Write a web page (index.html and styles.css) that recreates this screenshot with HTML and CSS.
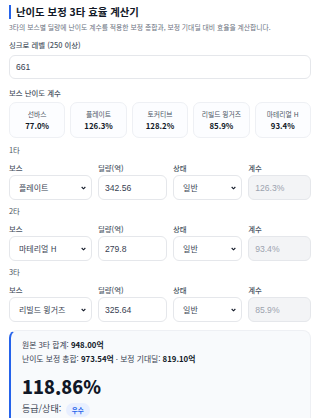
FILE: index.html
```html
<!DOCTYPE html>
<html lang="ko">
<head>
    <meta charset="utf-8">
    <title>난이도 보정 3타 효율 계산기</title>
    <link rel="stylesheet" href="styles.css">
</head>
<body>
    <div class="calc">
        <h1 class="title">난이도 보정 3타 효율 계산기</h1>
        <p class="desc">3타의 보스별 딜량에 난이도 계수를 적용한 보정 총합과, 보정 기대딜 대비 효율을 계산합니다.</p>

        <label class="label">싱크로 레벨 (250 이상)</label>
        <input class="field level" type="text" value="661">

        <div class="label section">보스 난이도 계수</div>
        <div class="coef-list">
            <div class="coef-card"><div class="coef-name">선바스</div><div class="coef-val">77.0%</div></div>
            <div class="coef-card"><div class="coef-name">플레이트</div><div class="coef-val">126.3%</div></div>
            <div class="coef-card"><div class="coef-name">토커티브</div><div class="coef-val">128.2%</div></div>
            <div class="coef-card"><div class="coef-name">리빌드 윙거즈</div><div class="coef-val">85.9%</div></div>
            <div class="coef-card"><div class="coef-name">마테리얼 H</div><div class="coef-val">93.4%</div></div>
        </div>

        <div class="hit">
            <div class="hit-title">1타</div>
            <div class="hit-row">
                <div class="col"><label class="label">보스</label>
                    <select class="field"><option>플레이트</option></select></div>
                <div class="col"><label class="label">딜량(억)</label>
                    <input class="field" type="text" value="342.56"></div>
                <div class="col"><label class="label">상태</label>
                    <select class="field"><option>일반</option></select></div>
                <div class="col"><label class="label">계수</label>
                    <input class="field ro" type="text" value="126.3%" readonly></div>
            </div>
        </div>

        <div class="hit">
            <div class="hit-title">2타</div>
            <div class="hit-row">
                <div class="col"><label class="label">보스</label>
                    <select class="field"><option>마테리얼 H</option></select></div>
                <div class="col"><label class="label">딜량(억)</label>
                    <input class="field" type="text" value="279.8"></div>
                <div class="col"><label class="label">상태</label>
                    <select class="field"><option>일반</option></select></div>
                <div class="col"><label class="label">계수</label>
                    <input class="field ro" type="text" value="93.4%" readonly></div>
            </div>
        </div>

        <div class="hit">
            <div class="hit-title">3타</div>
            <div class="hit-row">
                <div class="col"><label class="label">보스</label>
                    <select class="field"><option>리빌드 윙거즈</option></select></div>
                <div class="col"><label class="label">딜량(억)</label>
                    <input class="field" type="text" value="325.64"></div>
                <div class="col"><label class="label">상태</label>
                    <select class="field"><option>일반</option></select></div>
                <div class="col"><label class="label">계수</label>
                    <input class="field ro" type="text" value="85.9%" readonly></div>
            </div>
        </div>

        <div class="result">
            <div class="result-line">원본 3타 합계: <b>948.00억</b></div>
            <div class="result-line">난이도 보정 총합: <b>973.54억</b> · 보정 기대딜: <b>819.10억</b></div>
            <div class="result-big">118.86%</div>
            <div class="result-grade">등급/상태: <span class="badge">우수</span></div>
        </div>
    </div>
</body>
</html>
```

FILE: styles.css
```css
* {
    margin: 0;
    padding: 0;
    box-sizing: border-box;
}

body {
    font-family: "Noto Sans CJK KR", "Noto Sans", sans-serif;
    background: #ffffff;
    color: #111827;
    padding: 5px 9px 0 9px;
    overflow: hidden;
}

.title {
    font-size: 10.4px;
    font-weight: 700;
    line-height: 14px;
    padding-left: 5px;
    border-left: 2px solid #2563eb;
    color: #111827;
}

.desc {
    font-size: 6.8px;
    color: #6b7280;
    margin-top: 2px;
    line-height: 12px;
}

.label {
    display: block;
    font-size: 7.4px;
    font-weight: 500;
    color: #4b5563;
    line-height: 12px;
}

.calc > .label {
    margin-top: 6px;
}

.field {
    display: block;
    width: 100%;
    height: 25px;
    border: 1px solid #e5e7eb;
    border-radius: 6px;
    background: #ffffff;
    font-family: "Liberation Sans", "Noto Sans CJK KR", sans-serif;
    font-size: 8.6px;
    color: #374151;
    padding: 0 6px;
    outline: none;
}

.level {
    height: 24px;
    margin-top: 4px;
}

.calc > .section {
    margin-top: 8px;
}

.coef-list {
    display: grid;
    grid-template-columns: repeat(5, 1fr);
    gap: 5px;
    margin-top: 3px;
}

.coef-card {
    height: 36px;
    border: 1px solid #eef0f4;
    border-radius: 7px;
    background: #fcfdff;
    text-align: center;
    display: flex;
    flex-direction: column;
    justify-content: center;
    gap: 1px;
}

.coef-name {
    font-size: 6.8px;
    color: #4b5563;
    line-height: 10px;
}

.coef-val {
    font-size: 7.8px;
    font-weight: 700;
    color: #111827;
    line-height: 11px;
}

.hit {
    margin-top: 5px;
}

.calc > .coef-list + .hit {
    margin-top: 6px;
}

.hit-title {
    font-size: 7.4px;
    color: #4b5563;
    line-height: 12px;
}

.hit-row {
    display: grid;
    grid-template-columns: 1.32fr 1.1fr 1.1fr 1fr;
    gap: 6px;
    margin-top: 6px;
}

.col .label {
    margin-bottom: 1px;
}

select.field {
    appearance: none;
    -webkit-appearance: none;
    font-family: "Noto Sans CJK KR", sans-serif;
    font-size: 8px;
    padding-left: 9px;
    padding-right: 16px;
    background-image: url("data:image/svg+xml,%3Csvg xmlns='http://www.w3.org/2000/svg' width='6' height='4' viewBox='0 0 6 4'%3E%3Cpath d='M0.8 0.8 L3 3 L5.2 0.8' fill='none' stroke='%23111827' stroke-width='1.3'/%3E%3C/svg%3E");
    background-repeat: no-repeat;
    background-position: right 5px center;
    background-size: 5px 4px;
}

.ro {
    background: #f3f4f6;
    color: #9ca3af;
}

.result {
    margin-top: 8px;
    border: 1px solid #eef0f4;
    border-left: 2px solid #2563eb;
    border-radius: 8px;
    background: #f8fafc;
    padding: 7px 11px 10px 11px;
}

.result-line {
    font-size: 7.8px;
    color: #374151;
    line-height: 14px;
}

.result-line b {
    color: #111827;
    font-weight: 700;
}

.result-big {
    font-size: 18px;
    font-weight: 800;
    color: #111827;
    line-height: 28px;
    margin-top: 6px;
}

.result-grade {
    font-size: 9px;
    color: #374151;
    margin-top: 1px;
    line-height: 16px;
}

.badge {
    display: inline-block;
    font-size: 6.5px;
    font-weight: 700;
    color: #2563eb;
    background: #e8efff;
    border-radius: 7px;
    padding: 0 6px;
    line-height: 14px;
    margin-left: 2px;
    vertical-align: middle;
}
```
